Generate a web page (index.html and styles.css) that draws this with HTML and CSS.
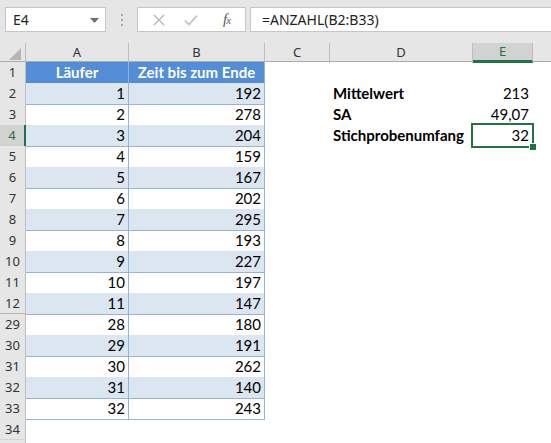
FILE: index.html
```html
<!DOCTYPE html>
<html>
<head>
<meta charset="utf-8">
<link rel="stylesheet" href="styles.css">
</head>
<body>
<div class="app">
  <div class="fbar">
    <div class="namebox"><span>E4</span><svg class="dd" width="9" height="5" viewBox="0 0 9 5"><path d="M0 0H9L4.5 5Z" fill="#6f6f6f"/></svg></div>
    <div class="dots"><i></i><i></i><i></i></div>
    <div class="fbtns">
      <svg width="12" height="12" viewBox="0 0 12 12"><path d="M1 1L11 11M11 1L1 11" stroke="#bdbdbd" stroke-width="1.5"/></svg>
      <svg width="14" height="12" viewBox="0 0 14 12"><path d="M1 6.5L5 10.5L13 1.5" stroke="#bdbdbd" stroke-width="1.6" fill="none"/></svg>
      <span class="fx">f<sub>x</sub></span>
    </div>
    <div class="finput">=ANZAHL(B2:B33)</div>
  </div>
  <div class="sheet">
    <div class="row hdr">
      <div class="corner"><svg width="12" height="12" viewBox="0 0 12 12"><path d="M12 0V12H0Z" fill="#b5b5b5"/></svg></div>
      <div class="ch">A</div><div class="ch">B</div><div class="ch">C</div><div class="ch">D</div><div class="ch sel">E</div><div class="ch last"></div>
    </div>
    <div class="row">
      <div class="rh">1</div><div class="c th">Läufer</div><div class="c th">Zeit bis zum Ende</div><div class="e"></div><div class="e"></div><div class="e"></div><div class="e"></div>
    </div>
    <div class="row band">
      <div class="rh">2</div><div class="c">1</div><div class="c">192</div><div class="e"></div><div class="e lbl">Mittelwert</div><div class="e num">213</div><div class="e"></div>
    </div>
    <div class="row">
      <div class="rh">3</div><div class="c">2</div><div class="c">278</div><div class="e"></div><div class="e lbl">SA</div><div class="e num">49,07</div><div class="e"></div>
    </div>
    <div class="row band">
      <div class="rh selr">4</div><div class="c">3</div><div class="c">204</div><div class="e"></div><div class="e lbl">Stichprobenumfang</div><div class="e num active">32</div><div class="e"></div>
    </div>
    <div class="row"><div class="rh">5</div><div class="c">4</div><div class="c">159</div><div class="e"></div><div class="e"></div><div class="e"></div><div class="e"></div></div>
    <div class="row band"><div class="rh">6</div><div class="c">5</div><div class="c">167</div><div class="e"></div><div class="e"></div><div class="e"></div><div class="e"></div></div>
    <div class="row"><div class="rh">7</div><div class="c">6</div><div class="c">202</div><div class="e"></div><div class="e"></div><div class="e"></div><div class="e"></div></div>
    <div class="row band"><div class="rh">8</div><div class="c">7</div><div class="c">295</div><div class="e"></div><div class="e"></div><div class="e"></div><div class="e"></div></div>
    <div class="row"><div class="rh">9</div><div class="c">8</div><div class="c">193</div><div class="e"></div><div class="e"></div><div class="e"></div><div class="e"></div></div>
    <div class="row band"><div class="rh">10</div><div class="c">9</div><div class="c">227</div><div class="e"></div><div class="e"></div><div class="e"></div><div class="e"></div></div>
    <div class="row"><div class="rh">11</div><div class="c">10</div><div class="c">197</div><div class="e"></div><div class="e"></div><div class="e"></div><div class="e"></div></div>
    <div class="row band hid"><div class="rh">12</div><div class="c">11</div><div class="c">147</div><div class="e"></div><div class="e"></div><div class="e"></div><div class="e"></div></div>
    <div class="row"><div class="rh">29</div><div class="c">28</div><div class="c">180</div><div class="e"></div><div class="e"></div><div class="e"></div><div class="e"></div></div>
    <div class="row band"><div class="rh">30</div><div class="c">29</div><div class="c">191</div><div class="e"></div><div class="e"></div><div class="e"></div><div class="e"></div></div>
    <div class="row"><div class="rh">31</div><div class="c">30</div><div class="c">262</div><div class="e"></div><div class="e"></div><div class="e"></div><div class="e"></div></div>
    <div class="row band"><div class="rh">32</div><div class="c">31</div><div class="c">140</div><div class="e"></div><div class="e"></div><div class="e"></div><div class="e"></div></div>
    <div class="row"><div class="rh">33</div><div class="c">32</div><div class="c">243</div><div class="e"></div><div class="e"></div><div class="e"></div><div class="e"></div></div>
    <div class="row"><div class="rh">34</div><div class="e"></div><div class="e"></div><div class="e"></div><div class="e"></div><div class="e"></div><div class="e"></div></div>
    <div class="row"><div class="rh"></div><div class="e"></div><div class="e"></div><div class="e"></div><div class="e"></div><div class="e"></div><div class="e"></div></div>
  </div>
</div>
</body>
</html>
```
FILE: styles.css
```css
* { box-sizing: border-box; }
html, body { margin: 0; padding: 0; background: #fff; overflow: hidden; }
.app { width: 551px; height: 443px; overflow: hidden; font-family: "Noto Sans", "Open Sans", sans-serif; }
.fbar { height: 43px; background: #e6e6e6; display: flex; align-items: flex-start; padding-top: 7px; }
.namebox { margin-left: 5px; width: 101px; height: 25px; background: #fff; border: 1px solid #c6c6c6; display: flex; align-items: center; justify-content: space-between; padding: 0 6px 0 7px; font-size: 14px; color: #222; }
.dd { margin-top: 1px; }
.dots { width: 31px; height: 25px; display: flex; flex-direction: column; align-items: center; justify-content: center; gap: 3px; }
.dots i { display: block; width: 2px; height: 2px; background: #a8a8a8; }
.fbtns { width: 109px; height: 25px; background: #fff; border: 1px solid #c6c6c6; display: flex; align-items: center; padding-left: 15px; gap: 19px; }
.fx { font-family: "Liberation Serif", serif; font-style: italic; font-size: 15px; color: #5a5a5a; margin-left: 6px; letter-spacing: -1px; }
.fx sub { font-size: 11px; vertical-align: 0; }
.finput { margin-left: 4px; flex: 1; height: 25px; background: #fff; border: 1px solid #c6c6c6; border-right: none; padding-left: 11px; font-size: 14px; line-height: 23px; color: #222; }
.sheet { display: flex; flex-direction: column; }
.row { display: grid; grid-template-columns: 26px 103px 136px 65px 143px 60px 1fr; height: 21px; flex: none; font-family: "Lato", "Liberation Sans", sans-serif; font-size: 15px; color: #000; }
.row.hdr { height: 19px; background: #e6e6e6; border-bottom: 1px solid #ababab; }
.corner { border-right: 1px solid #bdbdbd; display: flex; align-items: flex-end; justify-content: flex-end; padding: 0 4px 3px 0; }
.ch { font-family: "Noto Sans", sans-serif; font-size: 13px; color: #333; text-align: center; line-height: 18px; border-right: 1px solid #bdbdbd; }
.ch.last { border-right: none; }
.ch.sel { background: #d2d2d2; color: #217346; border-bottom: 3px solid #217346; line-height: 17px; }
.rh { background: #e6e6e6; border-right: 1px solid #bdbdbd; border-bottom: 1px solid #d4d4d4; font-family: "Noto Sans", sans-serif; font-size: 13px; color: #333; text-align: center; line-height: 20px; }
.rh.selr { background: #d2d2d2; color: #217346; border-right: 2px solid #217346; }
.hid .rh { border-bottom: 2px solid #b5b5b5; }
.c { border-right: 1px solid #95b3d7; border-bottom: 1px solid #95b3d7; text-align: right; padding-right: 3px; line-height: 21px; }
.band .c { background: #dce6f1; }
.c.th { background: #538dd5; color: #fff; font-weight: bold; text-align: center; padding: 0; }
.e { line-height: 21px; }
.lbl { font-weight: bold; padding-left: 3px; }
.num { text-align: right; padding-right: 4px; }
.active { position: relative; }
.active::after { content: ""; position: absolute; left: -2px; top: -2px; right: -1px; bottom: -1px; border: 2px solid #217346; }
.active::before { content: ""; position: absolute; right: -4px; bottom: -4px; width: 6px; height: 6px; background: #217346; border: 1px solid #fff; z-index: 1; }
```
